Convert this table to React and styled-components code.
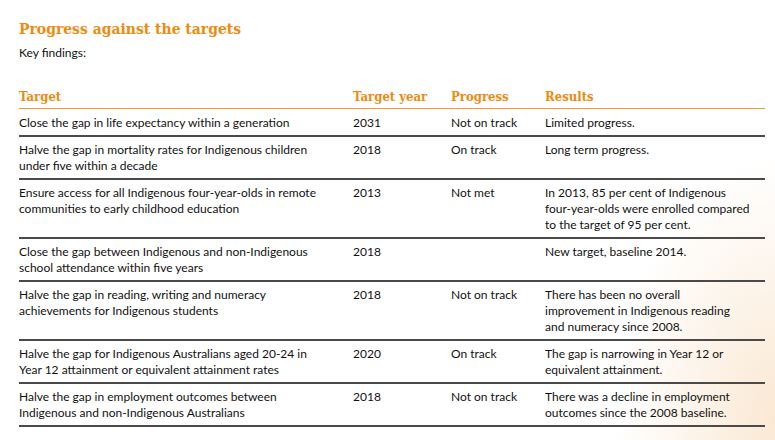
import React from "react";
import styled, { createGlobalStyle } from "styled-components";

const GlobalStyle = createGlobalStyle`
  html, body {
    margin: 0;
    padding: 0;
    background: #fff;
  }
  body {
    font-family: Lato, "Open Sans", sans-serif;
    color: #111;
  }
`;

const Page = styled.div`
  width: 775px;
  height: 440px;
  box-sizing: border-box;
  padding: 19px 10px 0 19px;
  background:
    radial-gradient(ellipse 160px 260px at 100% 95%, rgba(246, 214, 176, 0.55), rgba(255, 255, 255, 0) 100%),
    #fff;
  overflow: hidden;
`;

const Title = styled.h1`
  margin: 0;
  font-family: "DejaVu Serif Condensed", "DejaVu Serif", serif;
  font-stretch: condensed;
  font-weight: bold;
  font-size: 15.5px;
  line-height: 20px;
  color: #ef8a10;
`;

const Intro = styled.p`
  margin: 6px 0 0;
  font-size: 12px;
  line-height: 16px;
`;

const Table = styled.table`
  margin-top: 27px;
  width: 746px;
  border-collapse: collapse;
  table-layout: fixed;
  font-size: 12px;
  line-height: 16px;
`;

const Head = styled.th`
  width: ${(p) => p.$w}px;
  text-align: left;
  padding: 0 0 2px;
  font-family: "DejaVu Serif Condensed", "DejaVu Serif", serif;
  font-stretch: condensed;
  font-weight: bold;
  font-size: 13px;
  line-height: 18px;
  color: #ef8a10;
  border-bottom: 1px solid #f29a2e;
  vertical-align: bottom;
`;

const Row = styled.tr`
  border-bottom: 2px solid #4a4a4a;
`;

const Cell = styled.td`
  padding: ${(p) => (p.$first ? "6px" : "5px")} ${(p) => p.$pad}px 4px 0;
  vertical-align: top;
`;

const columns = [
  { title: "Target", width: 334, pad: 24 },
  { title: "Target year", width: 98, pad: 6 },
  { title: "Progress", width: 94, pad: 6 },
  { title: "Results", width: 220, pad: 14 },
];

const rows = [
  ["Close the gap in life expectancy within a generation", "2031", "Not on track", "Limited progress."],
  ["Halve the gap in mortality rates for Indigenous children under five within a decade", "2018", "On track", "Long term progress."],
  ["Ensure access for all Indigenous four-year-olds in remote communities to early childhood education", "2013", "Not met", "In 2013, 85 per cent of Indigenous four-year-olds were enrolled compared to the target of 95 per cent."],
  ["Close the gap between Indigenous and non-Indigenous school attendance within five years", "2018", "", "New target, baseline 2014."],
  ["Halve the gap in reading, writing and numeracy achievements for Indigenous students", "2018", "Not on track", "There has been no overall improvement in Indigenous reading and numeracy since 2008."],
  ["Halve the gap for Indigenous Australians aged 20-24 in Year 12 attainment or equivalent attainment rates", "2020", "On track", "The gap is narrowing in Year 12 or equivalent attainment."],
  ["Halve the gap in employment outcomes between Indigenous and non-Indigenous Australians", "2018", "Not on track", "There was a decline in employment outcomes since the 2008 baseline."],
];

export default function App() {
  return (
    <Page>
      <GlobalStyle />
      <Title>Progress against the targets</Title>
      <Intro>Key findings:</Intro>
      <Table>
        <thead>
          <tr>
            {columns.map((c) => (
              <Head key={c.title} $w={c.width}>{c.title}</Head>
            ))}
          </tr>
        </thead>
        <tbody>
          {rows.map((r, i) => (
            <Row key={i}>
              {r.map((c, j) => (
                <Cell key={j} $first={i === 0} $pad={columns[j].pad}>{c}</Cell>
              ))}
            </Row>
          ))}
        </tbody>
      </Table>
    </Page>
  );
}
